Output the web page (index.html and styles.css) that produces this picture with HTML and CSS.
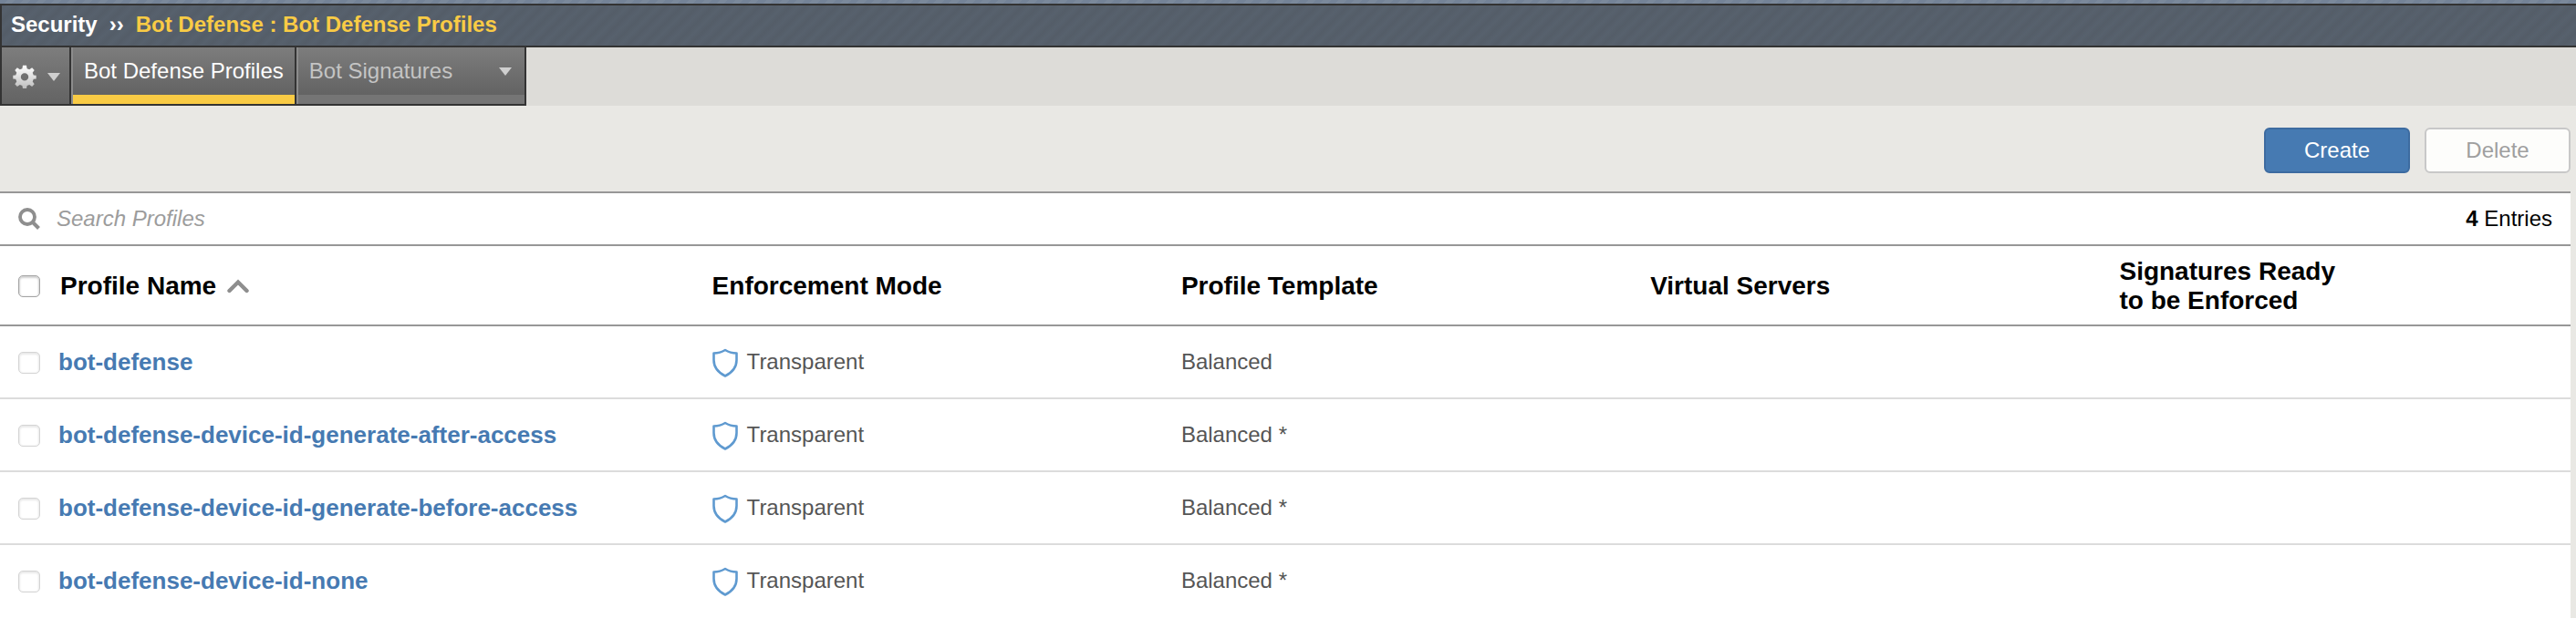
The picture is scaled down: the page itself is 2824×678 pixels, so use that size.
FILE: index.html
```html
<!DOCTYPE html>
<html lang="en">
<head>
<meta charset="utf-8">
<title>Bot Defense Profiles</title>
<link rel="stylesheet" href="styles.css">
</head>
<body>
<svg class="sprites" aria-hidden="true">
  <defs>
    <symbol id="shield" viewBox="0 0 28 32">
      <path d="M14 2 C10 4.500 6 5.500 1.500 5.500 V13 C1.500 21 7 27 14 30.500 C21 27 26.500 21 26.500 13 V5.500 C22 5.500 18 4.500 14 2 Z" fill="none" stroke="#5f9ad0" stroke-width="2.600" stroke-linejoin="round"/>
    </symbol>
  </defs>
</svg>
<header class="top">
  <h1 class="crumbs">
    <span>Security</span>
    <span class="sep">››</span>
    <span class="here">Bot Defense : Bot Defense Profiles</span>
  </h1>
</header>
<nav class="tabs">
  <button class="tab tab-menu" aria-label="Settings">
    <svg class="gear" viewBox="0 0 26 26">
      <defs>
        <linearGradient id="metal" x1="0" y1="0" x2="0" y2="1">
          <stop offset="0" stop-color="#ffffff"/>
          <stop offset="1" stop-color="#bdbdbd"/>
        </linearGradient>
      </defs>
      <path fill="url(#metal)" fill-rule="evenodd" d="M11 .8h4l.6 3.400 2.600 1.100 2.900-2 2.600 2.600-2 2.900 1.100 2.600 2.900.4v3.600l-2.900.4-1.100 2.600 2 2.900-2.600 2.600-2.900-2-2.600 1.100-.6 3.200h-4l-.6-3.200-2.600-1.100-2.900 2-2.600-2.600 2-2.900-1.100-2.600-2.900-.4v-3.600l2.900-.4 1.100-2.600-2-2.900 2.600-2.600 2.900 2 2.600-1.100zM13 9.200a4.200 4.200 0 1 0 0 8.400 4.200 4.200 0 0 0 0-8.400z"/>
    </svg>
    <svg class="caret" viewBox="0 0 14 9"><path d="M0 0h14L7 9z" fill="#cfcfcf"/></svg>
  </button>
  <a class="tab tab-active" href="#profiles">Bot Defense Profiles</a>
  <a class="tab tab-more" href="#signatures">Bot Signatures
    <svg class="caret" viewBox="0 0 14 9"><path d="M0 0h14L7 9z" fill="#cfcfcf"/></svg>
  </a>
</nav>
<main class="content" id="profiles">
  <div class="toolbar">
    <button class="btn btn-primary">Create</button>
    <button class="btn" disabled>Delete</button>
  </div>
  <div class="panel">
    <div class="search">
      <label class="search-label" for="q" aria-label="Search Profiles">
        <svg class="lens" viewBox="0 0 24 24"><circle cx="10" cy="10" r="8" fill="none" stroke="#8e8e8e" stroke-width="3.800"/><path d="M15.500 15.500 L22.500 22.500" stroke="#8e8e8e" stroke-width="4"/></svg>
      </label>
      <input class="search-input" id="q" type="text" placeholder="Search Profiles">
      <span class="count"><b>4</b> Entries</span>
    </div>
    <table class="grid">
      <colgroup><col class="c-check"><col><col class="c-std"><col class="c-std"><col class="c-std"><col class="c-last"></colgroup>
      <thead>
        <tr>
          <th class="check"><input type="checkbox" aria-label="Select all"></th>
          <th><span class="sort">Profile Name <svg class="chevron" viewBox="0 0 24 16"><path d="M2.500 13 L12 3.500 L21.500 13" fill="none" stroke="#8e8e8e" stroke-width="4.400" stroke-linecap="round"/></svg></span></th>
          <th>Enforcement Mode</th>
          <th>Profile Template</th>
          <th>Virtual Servers</th>
          <th>Signatures Ready<br>to be Enforced</th>
        </tr>
      </thead>
      <tbody>
        <tr>
          <td class="check"><input type="checkbox" aria-label="Select bot-defense"></td>
          <td><a href="#p1">bot-defense</a></td>
          <td><span class="mode"><svg class="shield"><use href="#shield"/></svg>Transparent</span></td>
          <td>Balanced</td><td></td><td></td>
        </tr>
        <tr>
          <td class="check"><input type="checkbox" aria-label="Select bot-defense-device-id-generate-after-access"></td>
          <td><a href="#p2">bot-defense-device-id-generate-after-access</a></td>
          <td><span class="mode"><svg class="shield"><use href="#shield"/></svg>Transparent</span></td>
          <td>Balanced *</td><td></td><td></td>
        </tr>
        <tr>
          <td class="check"><input type="checkbox" aria-label="Select bot-defense-device-id-generate-before-access"></td>
          <td><a href="#p3">bot-defense-device-id-generate-before-access</a></td>
          <td><span class="mode"><svg class="shield"><use href="#shield"/></svg>Transparent</span></td>
          <td>Balanced *</td><td></td><td></td>
        </tr>
        <tr>
          <td class="check"><input type="checkbox" aria-label="Select bot-defense-device-id-none"></td>
          <td><a href="#p4">bot-defense-device-id-none</a></td>
          <td><span class="mode"><svg class="shield"><use href="#shield"/></svg>Transparent</span></td>
          <td>Balanced *</td><td></td><td></td>
        </tr>
      </tbody>
    </table>
  </div>
</main>
</body>
</html>
```
FILE: styles.css
```css
* { box-sizing: border-box; }
body {
  margin: 0;
  background: #e9e8e4;
  font: 24px/28px "Liberation Sans", Arial, sans-serif;
  color: #000;
}
a { text-decoration: none; }
button, input { font: inherit; margin: 0; }
.sprites { display: none; }

.top {
  padding-top: 4px;
  background: repeating-linear-gradient(135deg, #748397 0 6px, #7b899b 6px 12px);
}
.crumbs {
  display: flex;
  align-items: center;
  margin: 0;
  height: 48px;
  padding: 0 10px 2px;
  border: 2px solid #333;
  border-right: 0;
  font-size: 24px;
  font-weight: bold;
  color: #fff;
  background: repeating-linear-gradient(135deg, #545d68, #57616d 6px, #545d68 12px);
}
.sep { margin: 0 13px; }
.here { color: #f9cb45; }

.tabs {
  display: flex;
  height: 64px;
  background: #dddcd8;
}
.tab {
  display: flex;
  align-items: center;
  padding: 0 12px 10px;
  border: solid #333;
  border-width: 0 2px 2px 0;
  border-radius: 0;
  color: #c4c4c4;
  background: linear-gradient(#7d7d7d, #636363 52px, #757575 52px);
  box-shadow: inset 2px 0 #8c8c8c;
}
.tab-menu {
  width: 78px;
  padding: 2px 10px 0 12px;
  border-left-width: 2px;
  background: linear-gradient(#7d7d7d, #636363);
  box-shadow: none;
  justify-content: space-between;
}
.tab-active {
  padding: 0 12px 10px 14px;
  color: #fff;
  background: linear-gradient(#7d7d7d, #636363 52px, #f9cb45 52px);
}
.tab-more { width: 252px; padding: 0 14px 10px; justify-content: space-between; }
.gear { width: 26px; height: 26px; }
.caret { width: 14px; height: 9px; }

.content { padding-right: 6px; }
.toolbar {
  display: flex;
  justify-content: flex-end;
  gap: 16px;
  padding: 24px 0 20px;
}
.btn {
  width: 160px;
  height: 50px;
  padding: 0;
  border: 2px solid #c8c8c8;
  border-radius: 6px;
  background: #fdfdfb;
  color: #9f9f9f;
}
.btn-primary { background: #467ab2; border-color: #3d6ba0; color: #fff; }

.panel { background: #fff; border-top: 2px solid #979797; }
.search {
  display: flex;
  align-items: center;
  height: 58px;
  padding: 0 20px;
  border-bottom: 2px solid #979797;
}
.search-label { display: flex; }
.lens { width: 24px; height: 24px; }
.search-input {
  flex: 1;
  padding: 0 18px;
  border: 0;
  outline: 0;
  background: none;
  font-style: italic;
}
.search-input::placeholder { color: #9c9c9c; opacity: 1; }

.grid { width: 100%; table-layout: fixed; border-collapse: separate; border-spacing: 0; }
.c-check { width: 64px; }
.c-std { width: 18.25%; }
.c-last { width: 17.55%; }
th, td { padding: 0; text-align: left; vertical-align: middle; }
th { height: 88px; padding-top: 2px; border-bottom: 2px solid #979797; font-size: 28px; line-height: 32px; }
td { height: 80px; border-bottom: 2px solid #dcdcdc; color: #555; }
tbody tr:last-child td { border-bottom-color: transparent; }
.check { padding: 2px 0 0 20px; }
.check input {
  appearance: none;
  display: block;
  width: 24px;
  height: 24px;
  border: 1px solid #d4d4d4;
  border-radius: 5px;
  background: #fff;
  box-shadow: inset 0 1px 2px 1px #e9e9e9;
}
th.check input { border-color: #a4a4a4; box-shadow: inset 0 1px 2px 1px #d2d2d2; }
.sort { display: flex; align-items: center; gap: 12px; padding-left: 2px; }
.chevron { width: 24px; height: 16px; }
td a { color: #467ab2; font-size: 26px; font-weight: bold; }
.mode { display: flex; align-items: center; gap: 10px; }
.shield { width: 28px; height: 34px; padding-top: 2px; }
```
